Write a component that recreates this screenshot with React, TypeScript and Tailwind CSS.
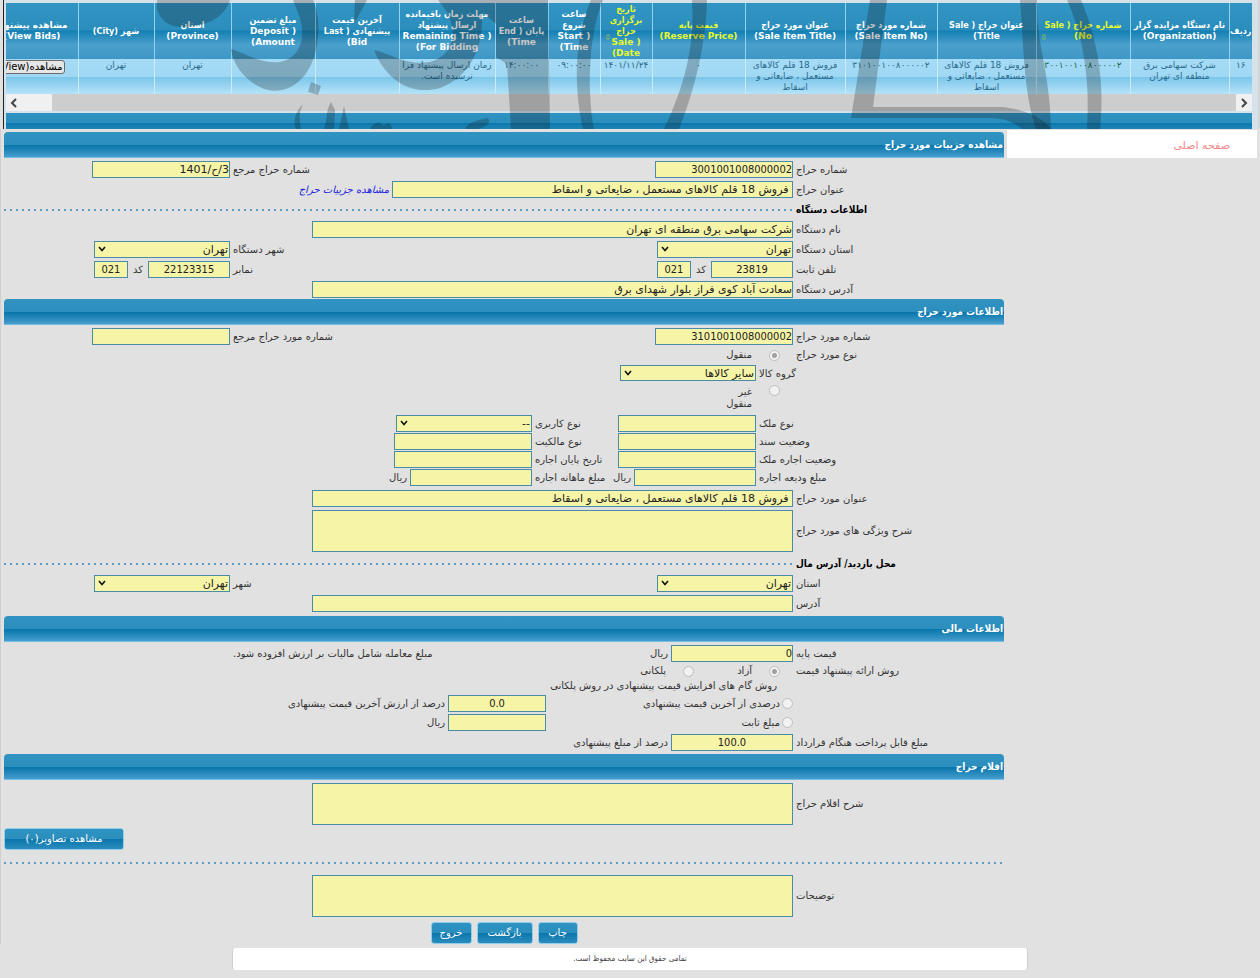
import type { ReactNode } from 'react';

const columns: { w: string; title: string; cell: string; yellow?: boolean; sort?: boolean; green?: boolean }[] = [
  { w: 'w-[23px]', title: 'ردیف', cell: '۱۶' },
  { w: 'w-[99px]', title: 'نام دستگاه مزایده گزار\n(Organization)', cell: 'شرکت سهامی برق\nمنطقه ای تهران' },
  { w: 'w-[94px]', title: 'شماره حراج ( Sale\nNo)', cell: '۳۰۰۱۰۰۱۰۰۸۰۰۰۰۰۲', yellow: true, sort: true, green: true },
  { w: 'w-[99px]', title: 'عنوان حراج ( Sale\nTitle)', cell: 'فروش 18 قلم کالاهای\nمستعمل ، ضایعاتی و\nاسقاط' },
  { w: 'w-[92px]', title: 'شماره مورد حراج\n(Sale Item No)', cell: '۳۱۰۱۰۰۱۰۰۸۰۰۰۰۰۲' },
  { w: 'w-[100px]', title: 'عنوان مورد حراج\n(Sale Item Title)', cell: 'فروش 18 قلم کالاهای\nمستعمل ، ضایعاتی و\nاسقاط' },
  { w: 'w-[93px]', title: 'قیمت پایه\n(Reserve Price)', cell: '۰', yellow: true },
  { w: 'w-[52px]', title: 'تاریخ\nبرگزاری\nحراج\n( Sale\nDate)', cell: '۱۴۰۱/۱۱/۲۴', yellow: true, sort: true },
  { w: 'w-[52px]', title: 'ساعت\nشروع\n( Start\nTime)', cell: '۰۹:۰۰:۰۰' },
  { w: 'w-[53px]', title: 'ساعت\nپایان ( End\nTime)', cell: '۱۴:۰۰:۰۰' },
  { w: 'w-[96px]', title: 'مهلت زمان باقیمانده\nارسال پیشنهاد\n( Remaining Time\nFor Bidding)', cell: 'زمان ارسال پیشنهاد فرا\nنرسیده است.' },
  { w: 'w-[84px]', title: 'آخرین قیمت\nپیشنهادی ( Last\nBid)', cell: '' },
  { w: 'w-[84px]', title: 'مبلغ تضمین\n( Deposit\nAmount)', cell: '' },
  { w: 'w-[77px]', title: 'استان\n(Province)', cell: 'تهران' },
  { w: 'w-[76px]', title: 'شهر (City)', cell: 'تهران' },
];

function Watermark() {
  return (
    <svg className="pointer-events-none absolute top-0 left-0 h-[129px] w-[1260px]" viewBox="4 0 1260 129" fill="#101010" fillOpacity="0.24" aria-hidden="true">
      <path d="M157 0C155 14 164 27 182 27C204 27 224 19 230 0Z" />
      <path d="M293 0H313C322 20 320 55 305 75C293 90 275 95 260 87C245 80 233 65 231 49C245 53 260 64 280 62C300 58 306 38 300 18Z" />
      <path d="M311 82L321 86L318 95L308 92Z" />
      <path d="M355 0H367L354 24Z" />
      <path d="M374 50C392 54 406 66 430 62C455 55 462 28 438 0H548L550 129H511L507 64L496 57V24L482 12C484 40 474 76 440 88C408 97 384 76 374 50Z" />
      <path d="M591 0H603C590 30 586 85 594 129H583C573 85 575 35 591 0Z" />
      <path d="M692 0H707C706 45 694 92 679 129H664C685 85 695 45 692 0Z" />
      <path d="M870 0H887L873 107H1000C1020 108 1042 116 1051 129H1022C1012 120 1000 118 985 118H851Z" />
      <path d="M1020 0H1037C1036 45 1050 70 1051 129H1036C1023 90 1024 45 1020 0Z" />
      <path d="M1067 0H1081C1098 40 1105 85 1100 129H1087C1090 85 1085 40 1067 0Z" />
      <path d="M303 104C295 112 293 121 296 129H301C299 120 299 112 303 104Z" />
      <path d="M331 102L335 110L334 129H324C328 118 325 112 331 102ZM344 106L349 129H339Z" />
      <path d="M370 129C374 121 382 121 383 126C388 121 392 124 392 129Z" />
      <path d="M465 129C467 122 479 120 488 118C492 124 485 127 478 129Z" />
    </svg>
  );
}

function SortMark() {
  return (
    <svg viewBox="0 0 6 8" className="absolute bottom-[18px] left-1 h-2 w-1.5" fill="none" stroke="#a9c93f" aria-hidden="true">
      <path d="M1 3L3 1L5 3ZM1 5L3 7L5 5Z" strokeWidth="0.5" />
    </svg>
  );
}

function HeadText({ text }: { text: string }) {
  return text.split('\n').map((line) => (
    <span key={line} className={/^[(A-Z]/.test(line) ? "block font-['DejaVu_Sans',sans-serif]" : 'block'}>{line}</span>
  ));
}

function AuctionTable() {
  return (
    <section className="relative ml-[3px] h-[129px] overflow-hidden border-l border-[#222] bg-[#d6e2ea] pt-[3px] pr-[6px] pl-[2px]">
      <div className="overflow-hidden">
        <table className="w-full min-w-[1266px] table-fixed border-collapse text-center">
          <thead>
            <tr className="h-14 bg-[linear-gradient(#3195c4_0,#2b8dbb_48%,#1480b3_50%,#4ba0cc_75%,#3d97c5_100%)]">
              {columns.map((c) => (
                <th key={c.title} scope="col" className={`${c.w} relative border-l border-[#8fd2f2] p-0 font-['DejaVu_Sans_Condensed','DejaVu_Sans',sans-serif] text-[9px] leading-[11px] font-bold whitespace-pre ${c.yellow ? 'text-[#e6fb2c]' : 'text-white'}`}>
                  <HeadText text={c.title} />
                  {c.sort && <SortMark />}
                </th>
              ))}
              <th scope="col" className="p-0 text-[9px] leading-[11px] font-bold whitespace-pre text-white">
                <HeadText text={'مشاهده پیشنهاد\n(View Bids)'} />
              </th>
            </tr>
          </thead>
          <tbody>
            <tr className="h-[35px] bg-[linear-gradient(#a5dbf6_0,#a0d8f4_50%,#7cc6ea_52%,#b5e3f8_100%)] align-top">
              {columns.map((c) => (
                <td key={c.title} className={`border-l border-[#c9ecfb] p-0 pt-px text-[9px] leading-[11px] whitespace-pre ${c.green ? 'text-[#1d6b4e]' : 'text-[#2b6a8c]'}`}>
                  {c.cell}
                </td>
              ))}
              <td className="p-0 pt-px text-right">
                <button type="button" className="mr-[13px] block h-[14px] rounded-[3px] border border-[#6b6b6b] bg-[#e6e6e6] px-px text-[10px] leading-[12px] whitespace-nowrap text-black">مشاهده(View)</button>
              </td>
            </tr>
          </tbody>
        </table>
      </div>
      <div className="flex h-[17px] justify-between bg-[#cdcdcd]">
        <button type="button" aria-label="Scroll right" className="flex w-4 items-center justify-center bg-[#f0f0f0]">
          <Arrow d="M3 1L7 5L3 9" />
        </button>
        <button type="button" aria-label="Scroll left" className="flex w-[46px] items-center justify-end bg-[#f0f0f0] pl-[3px]">
          <Arrow d="M7 1L3 5L7 9" />
        </button>
      </div>
      <div className="mt-[2px] h-4 bg-[linear-gradient(#2f93c2_0,#2b8ebd_60%,#0d78ae_65%,#1f85b6_100%)]" />
      <Watermark />
    </section>
  );
}

function Arrow({ d }: { d: string }) {
  return (
    <svg viewBox="0 0 10 10" className="h-[10px] w-[10px]" fill="none" stroke="#444" strokeWidth="2" aria-hidden="true">
      <path d={d} />
    </svg>
  );
}

function Bar({ children }: { children: ReactNode }) {
  return (
    <h2 className="flex h-[26px] items-center rounded-t-[4px] bg-[linear-gradient(#3093c2_0,#2b8ebd_50%,#0a76ac_52%,#429bcb_94%,#8accf4_100%)] px-px font-['DejaVu_Sans_Condensed','DejaVu_Sans',sans-serif] text-[10px] font-bold text-white">
      {children}
    </h2>
  );
}

function Dots({ title }: { title?: string }) {
  return (
    <div className="flex h-[17px] items-center gap-[3px]">
      {title && <h3 className="w-[208px] shrink-0 text-left font-['DejaVu_Sans_Condensed','DejaVu_Sans',sans-serif] text-[10px] font-bold text-black">{title}</h3>}
      <div className="h-[2px] flex-1 bg-[repeating-linear-gradient(90deg,#5d9dc0_0_2px,transparent_2px_6px)]" />
    </div>
  );
}

const BOX = 'rounded-none border border-[#4a8ba8] bg-[#f6f4a6] text-[#222] outline-none';

function Box({ id, value = '', w, center, label }: { id?: string; value?: string; w: string; center?: boolean; label?: string }) {
  const face = /^[\d.]+$/.test(value) ? "font-['DejaVu_Sans_Condensed','DejaVu_Sans',sans-serif]" : '';
  return <input id={id} aria-label={label} readOnly value={value} className={`${BOX} ${w} ${face} h-[17px] shrink-0 p-0 text-[11px] leading-[15px] ${center ? 'text-center' : 'text-right'}`} />;
}

function Pick({ id, value, w, h = 'h-[17px]' }: { id: string; value: string; w: string; h?: string }) {
  return (
    <div className={`relative shrink-0 ${w} ${h}`}>
      <select id={id} defaultValue={value} className={`${BOX} block h-full w-full appearance-none px-px py-0 text-[11px] leading-[15px]`}>
        <option>{value}</option>
      </select>
      <svg viewBox="0 0 8 6" className="pointer-events-none absolute top-[5px] left-1 h-[6px] w-2" fill="none" stroke="#111" strokeWidth="1.6" aria-hidden="true">
        <path d="M1 1L4 4.5L7 1" />
      </svg>
    </div>
  );
}

function Area({ id }: { id: string }) {
  return <textarea id={id} readOnly className={`${BOX} block h-[42px] w-[481px] resize-none p-0`} />;
}

function Label({ id, children }: { id: string; children: ReactNode }) {
  return <label htmlFor={id} className="text-left whitespace-nowrap">{children}</label>;
}

function Row({ children }: { children: ReactNode }) {
  return <div className="grid grid-cols-[208px_minmax(0,1fr)_208px_226px] items-center gap-[3px]">{children}</div>;
}

function SubRow({ children }: { children: ReactNode }) {
  return <div className="grid h-[18px] grid-cols-[245px_143px_75px_minmax(0,1fr)] items-start gap-[3px] leading-[17px]">{children}</div>;
}

function Radio({ id, name, checked = false }: { id: string; name: string; checked?: boolean }) {
  return (
    <input
      id={id}
      type="radio"
      name={name}
      disabled
      defaultChecked={checked}
      className="m-0 block h-[11px] w-[11px] shrink-0 appearance-none rounded-full border border-[#bdbdbd] bg-[#f2f2f2] checked:bg-[radial-gradient(circle,#a0a0a0_0_2px,#f2f2f2_3px)]"
    />
  );
}

function Button({ children, w }: { children: ReactNode; w: string }) {
  return (
    <button type="button" className={`h-[22px] ${w} rounded-[3px] border border-[#8fcdea] bg-[linear-gradient(#2f93c2_0,#2b8ebd_48%,#0a76ac_50%,#2b8cbd_100%)] text-[10px] text-white`}>
      {children}
    </button>
  );
}

export default function App() {
  return (
    <div dir="rtl" lang="fa" className="min-h-screen bg-[#e1e1e1] font-['DejaVu_Sans',sans-serif] text-[10px] leading-[12px] text-[#333]">
      <div className="border-r-2 border-[#d4d4d4]"><AuctionTable /></div>
      <div className="flex items-start gap-[3px] border-l border-[#cfcfcf] pt-[3px] pr-[3px] pl-[3px]">
        <nav className="-mt-[2px] flex h-[28px] w-[250px] shrink-0 items-center bg-white px-[27px] pt-1">
          <a href="#" className="text-[11px] text-[#f28a8a]">صفحه اصلی</a>
        </nav>
        <main className="min-w-0 flex-1">
          <Bar>مشاهده جزییات مورد حراج</Bar>
          <div className="flex flex-col gap-[3px] py-[3px] pb-px">
            <Row>
              <Label id="no">شماره حراج</Label>
              <Box id="no" value="3001001008000002" w="w-[138px]" />
              <Label id="ref">شماره حراج مرجع</Label>
              <Box id="ref" value="3/ح/1401" w="w-[138px]" />
            </Row>
            <div className="flex items-center gap-[3px]">
              <div className="flex w-[208px] shrink-0 justify-end"><Label id="title">عنوان حراج</Label></div>
              <Box id="title" value=" فروش 18 قلم کالاهای مستعمل ، ضایعاتی و اسقاط" w="w-[401px]" />
              <a href="#" className="text-[#2222dd] italic">مشاهده جزییات حراج</a>
            </div>
            <Dots title="اطلاعات دستگاه" />
            <Row>
              <Label id="org">نام دستگاه</Label>
              <Box id="org" value="شرکت سهامی برق منطقه ای تهران" w="w-[481px]" />
            </Row>
            <Row>
              <Label id="prov">استان دستگاه</Label>
              <Pick id="prov" value="تهران" w="w-[136px]" />
              <Label id="city">شهر دستگاه</Label>
              <Pick id="city" value="تهران" w="w-[136px]" />
            </Row>
            <Row>
              <Label id="tel">تلفن ثابت</Label>
              <div className="flex items-center gap-[5px]">
                <Box id="tel" value="23819" w="w-[82px]" center />
                <label htmlFor="telc">کد</label>
                <Box id="telc" value="021" w="w-[34px]" center />
              </div>
              <Label id="fax">نمابر</Label>
              <div className="flex items-center gap-[5px]">
                <Box id="fax" value="22123315" w="w-[82px]" center />
                <label htmlFor="faxc">کد</label>
                <Box id="faxc" value="021" w="w-[34px]" center />
              </div>
            </Row>
            <Row>
              <Label id="addr">آدرس دستگاه</Label>
              <Box id="addr" value="سعادت آباد کوی فراز بلوار شهدای برق" w="w-[481px]" />
            </Row>
          </div>

          <Bar>اطلاعات مورد حراج</Bar>
          <div className="pt-[3px] pb-1">
            <Row>
              <Label id="item">شماره مورد حراج</Label>
              <Box id="item" value="3101001008000002" w="w-[138px]" />
              <Label id="itemref">شماره مورد حراج مرجع</Label>
              <Box id="itemref" w="w-[138px]" />
            </Row>
            <div className="flex h-5 items-center gap-[3px]">
              <span className="w-[208px] shrink-0 text-left">نوع مورد حراج</span>
              <span className="flex w-[38px] justify-center"><Radio id="movable" name="kind" checked /></span>
              <label htmlFor="movable">منقول</label>
            </div>
            <SubRow>
              <Label id="group">گروه کالا</Label>
              <Pick id="group" value="سایر کالاها" w="w-[136px]" h="h-4" />
            </SubRow>
            <div className="flex h-8 items-start gap-[3px] pt-[2px]">
              <span className="w-[208px] shrink-0" />
              <span className="flex w-[38px] justify-center"><Radio id="fixed" name="kind" /></span>
              <label htmlFor="fixed" className="w-7 pt-px">غیر منقول</label>
            </div>
            <SubRow>
              <Label id="estate">نوع ملک</Label>
              <Box id="estate" w="w-[138px]" />
              <Label id="usage">نوع کاربری</Label>
              <Pick id="usage" value="--" w="w-[136px]" />
            </SubRow>
            <SubRow>
              <Label id="deed">وضعیت سند</Label>
              <Box id="deed" w="w-[138px]" />
              <Label id="owner">نوع مالکیت</Label>
              <Box id="owner" w="w-[138px]" />
            </SubRow>
            <SubRow>
              <Label id="rent">وضعیت اجاره ملک</Label>
              <Box id="rent" w="w-[138px]" />
              <Label id="rentend">تاریخ پایان اجاره</Label>
              <Box id="rentend" w="w-[138px]" />
            </SubRow>
            <SubRow>
              <Label id="deposit">مبلغ ودیعه اجاره</Label>
              <div className="flex gap-[3px]"><Box id="deposit" w="w-[122px]" /><span>ریال</span></div>
              <Label id="monthly">مبلغ ماهانه اجاره</Label>
              <div className="flex gap-[3px]"><Box id="monthly" w="w-[122px]" /><span>ریال</span></div>
            </SubRow>
            <div className="flex flex-col gap-[3px] pt-[3px]">
              <Row>
                <Label id="itemtitle">عنوان مورد حراج</Label>
                <Box id="itemtitle" value=" فروش 18 قلم کالاهای مستعمل ، ضایعاتی و اسقاط" w="w-[481px]" />
              </Row>
              <Row>
                <Label id="desc">شرح ویژگی های مورد حراج</Label>
                <Area id="desc" />
              </Row>
              <Dots title="محل بازدید/ آدرس مال" />
              <Row>
                <Label id="vprov">استان</Label>
                <Pick id="vprov" value="تهران" w="w-[136px]" />
                <Label id="vcity">شهر</Label>
                <Pick id="vcity" value="تهران" w="w-[136px]" />
              </Row>
              <Row>
                <Label id="vaddr">آدرس</Label>
                <Box id="vaddr" w="w-[481px]" />
              </Row>
            </div>
          </div>

          <Bar>اطلاعات مالی</Bar>
          <div className="pt-[3px] pb-[3px]">
            <Row>
              <Label id="base">قیمت پایه</Label>
              <div className="flex items-center gap-[3px]"><Box id="base" value="0" w="w-[122px]" /><span>ریال</span></div>
              <span className="text-left whitespace-nowrap">مبلغ معامله شامل مالیات بر ارزش افزوده شود.</span>
            </Row>
            <div className="flex h-[18px] items-center gap-[3px]">
              <span className="w-[208px] shrink-0 text-left">روش ارائه پیشنهاد قیمت</span>
              <span className="flex w-[38px] justify-center"><Radio id="free" name="method" checked /></span>
              <label htmlFor="free" className="w-[42px]">آزاد</label>
              <span className="flex w-[38px] justify-center"><Radio id="step" name="method" /></span>
              <label htmlFor="step">پلکانی</label>
            </div>
            <p className="h-[14px] pr-[227px]">روش گام های افزایش قیمت پیشنهادی در روش پلکانی</p>
            <div className="grid h-[19px] grid-cols-[208px_244px_minmax(0,1fr)] items-center gap-[3px]">
              <span />
              <span className="flex items-center gap-[2px]"><Radio id="pct" name="stepkind" /><label htmlFor="pct">درصدی از آخرین قیمت پیشنهادی</label></span>
              <span className="flex items-center gap-[3px]"><Box label="درصد" value="0.0" w="w-[98px]" center /><span>درصد از ارزش آخرین قیمت پیشنهادی</span></span>
            </div>
            <div className="grid h-[19px] grid-cols-[208px_244px_minmax(0,1fr)] items-center gap-[3px]">
              <span />
              <span className="flex items-center gap-[2px]"><Radio id="amt" name="stepkind" /><label htmlFor="amt">مبلغ ثابت</label></span>
              <span className="flex items-center gap-[3px]"><Box label="ریال" w="w-[98px]" /><span>ریال</span></span>
            </div>
            <div className="pt-[2px]">
              <Row>
                <Label id="pay">مبلغ قابل پرداخت هنگام قرارداد</Label>
                <div className="flex items-center gap-[3px]"><Box id="pay" value="100.0" w="w-[122px]" center /><span>درصد از مبلغ پیشنهادی</span></div>
              </Row>
            </div>
          </div>

          <Bar>اقلام حراج</Bar>
          <div className="pt-[3px]">
            <Row>
              <Label id="items">شرح اقلام حراج</Label>
              <Area id="items" />
            </Row>
            <div className="flex justify-end pt-[3px]"><Button w="w-[120px]">مشاهده تصاویر(۰)</Button></div>
            <div className="py-[4px]"><Dots /></div>
            <Row>
              <Label id="notes">توضیحات</Label>
              <Area id="notes" />
            </Row>
            <div className="flex justify-center gap-[5px] pt-[5px]">
              <Button w="w-10">چاپ</Button>
              <Button w="w-14">بازگشت</Button>
              <Button w="w-[41px]">خروج</Button>
            </div>
          </div>
        </main>
      </div>
      <footer className="mx-[232px] mt-1 flex h-[22px] items-center justify-center rounded-[3px] border-x border-[#cfcfcf] bg-white font-['DejaVu_Sans_Condensed','DejaVu_Sans',sans-serif] text-[8px] text-[#444]">
        تمامی حقوق این سایت محفوظ است.
      </footer>
    </div>
  );
}
